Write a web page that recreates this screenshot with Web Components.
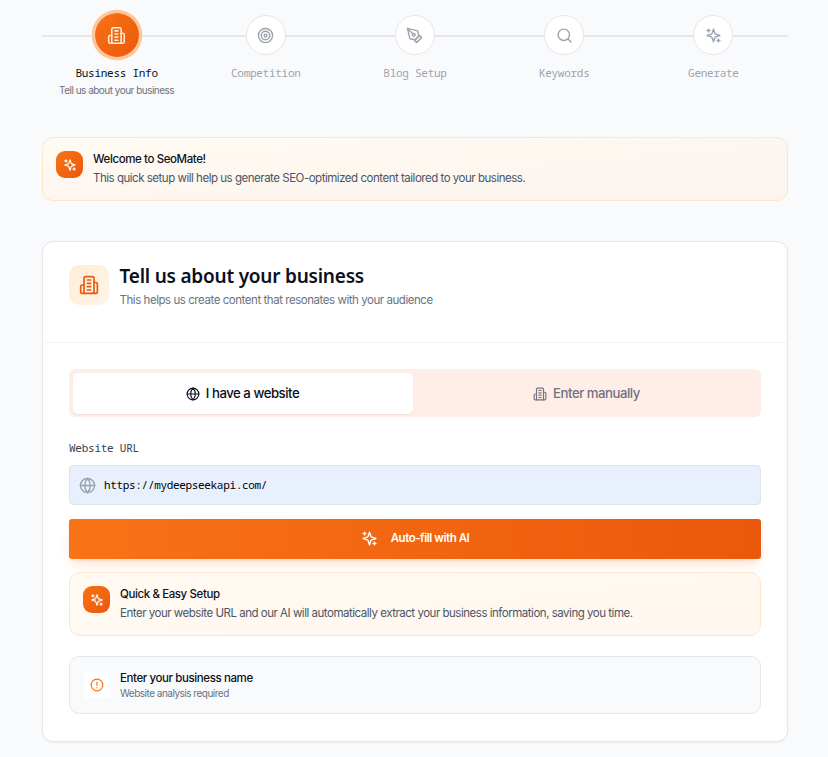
<!DOCTYPE html>
<html lang="en">
<head>
<meta charset="utf-8">
<title>SeoMate setup</title>
<style>
  body {
    margin: 0;
    background: #f9fafc;
    color: #0b1020;
    font-family: Inter, "Liberation Sans", sans-serif;
    --mono: "Noto Sans Mono", "DejaVu Sans Mono", monospace;
  }
</style>
</head>
<body>
<setup-wizard></setup-wizard>

<script>
const ICONS = {
  building: '<path d="M6 22V4a2 2 0 0 1 2-2h8a2 2 0 0 1 2 2v18Z"/><path d="M6 12H4a2 2 0 0 0-2 2v6a2 2 0 0 0 2 2h2"/><path d="M18 9h2a2 2 0 0 1 2 2v9a2 2 0 0 1-2 2h-2"/><path d="M10 6h4M10 10h4M10 14h4M10 18h4"/>',
  target: '<circle cx="12" cy="12" r="10"/><circle cx="12" cy="12" r="6"/><circle cx="12" cy="12" r="2"/>',
  pen: '<path d="m12 19 7-7 3 3-7 7-3-3z"/><path d="m18 13-1.5-7.5L2 2l3.5 14.5L13 18l5-5z"/><path d="m2 2 7.586 7.586"/><circle cx="11" cy="11" r="2"/>',
  search: '<circle cx="11" cy="11" r="8"/><path d="m21 21-4.3-4.3"/>',
  sparkles: '<path d="m12 3-1.912 5.813a2 2 0 0 1-1.275 1.275L3 12l5.813 1.912a2 2 0 0 1 1.275 1.275L12 21l1.912-5.813a2 2 0 0 1 1.275-1.275L21 12l-5.813-1.912a2 2 0 0 1-1.275-1.275L12 3Z"/><path d="M5 3v4M19 17v4M3 5h4M17 19h4"/>',
  globe: '<circle cx="12" cy="12" r="10"/><path d="M12 2a14.5 14.5 0 0 0 0 20 14.5 14.5 0 0 0 0-20"/><path d="M2 12h20"/>',
  alert: '<circle cx="12" cy="12" r="10"/><path d="M12 7v6M12 16.5h.01"/>',
};

class UiIcon extends HTMLElement {
  constructor() {
    super();
    this.attachShadow({ mode: 'open' });
  }

  connectedCallback() {
    const size = this.getAttribute('size') || 16;
    this.shadowRoot.innerHTML = `
      <style>
        :host { display: block; flex: none; width: ${size}px; height: ${size}px; }
        svg { display: block; }
      </style>
      <svg width="${size}" height="${size}" viewBox="0 0 24 24" fill="none" stroke="currentColor"
        stroke-width="2" stroke-linecap="round" stroke-linejoin="round">${ICONS[this.getAttribute('name')]}</svg>
    `;
  }
}

class StepItem extends HTMLElement {
  constructor() {
    super();
    this.attachShadow({ mode: 'open' });
  }

  connectedCallback() {
    this.shadowRoot.innerHTML = `
      <style>
        :host {
          display: flex;
          flex-direction: column;
          align-items: center;
          color: #9ca3af;
        }

        .dot {
          display: grid;
          place-items: center;
          box-sizing: border-box;
          width: 40px;
          height: 40px;
          border-radius: 50%;
          border: 1px solid #e5e7eb;
          background: #fff;
        }

        .label {
          margin-top: 10px;
          font: 11px/16px var(--mono);
          letter-spacing: -0.27px;
        }

        ::slotted(*) {
          margin-top: 2px;
          font-size: 10px;
          line-height: 15px;
          letter-spacing: -0.51px;
          color: #6b7280;
        }

        :host([active]) .dot {
          border: 0;
          padding-right: 1px;
          color: #ffedd5;
          background: linear-gradient(135deg, #f97316, #ea580c);
          box-shadow: 0 0 0 3px #fdc79d, 0 2px 5px rgba(249, 115, 22, 0.12);
          transform: scale(1.1);
        }

        :host([active]) .label { color: #0b1020; }
      </style>
      <div class="dot"><ui-icon name="${this.getAttribute('icon')}" size="17"></ui-icon></div>
      <div class="label">${this.getAttribute('label')}</div>
      <slot></slot>
    `;
  }
}

class StepBar extends HTMLElement {
  constructor() {
    super();
    this.attachShadow({ mode: 'open' }).innerHTML = `
      <style>
        :host {
          display: grid;
          grid-template-columns: repeat(5, 1fr);
          height: 122px;
          padding-top: 15px;
          box-sizing: border-box;
          background: linear-gradient(#e5e7eb, #e5e7eb) 0 35px / 100% 2px no-repeat;
        }
      </style>
      <slot></slot>
    `;
  }
}

class TipBanner extends HTMLElement {
  constructor() {
    super();
    this.attachShadow({ mode: 'open' }).innerHTML = `
      <style>
        :host {
          display: flex;
          align-items: flex-start;
          gap: 10px;
          box-sizing: border-box;
          height: 64px;
          padding: 13px;
          border: 1px solid #fee6cb;
          border-radius: 11px;
          background: linear-gradient(to bottom right, #fffaf2, var(--tip-end, #fff7f0));
        }

        .badge {
          display: grid;
          place-items: center;
          width: 27px;
          height: 27px;
          border-radius: 9px;
          color: #fff;
          background: linear-gradient(135deg, #f97316, #ea580c);
        }

        .title {
          font-size: 11.5px;
          font-weight: 500;
          line-height: 17px;
          letter-spacing: -0.4px;
        }

        .text {
          margin-top: 2px;
          font-size: 11.5px;
          line-height: 17px;
          letter-spacing: -0.48px;
          color: #4b5563;
        }
      </style>
      <div class="badge"><ui-icon name="sparkles" size="14"></ui-icon></div>
      <div>
        <div class="title"><slot name="title"></slot></div>
        <div class="text"><slot></slot></div>
      </div>
    `;
  }
}

class SetupCard extends HTMLElement {
  constructor() {
    super();
    this.attachShadow({ mode: 'open' }).innerHTML = `
      <style>
        :host {
          display: block;
          box-sizing: border-box;
          height: 501px;
          border: 1px solid #e5e7eb;
          border-radius: 11px;
          background: #fff;
          box-shadow: 0 1px 2px rgba(0, 0, 0, 0.05);
        }

        header {
          display: flex;
          gap: 10.5px;
          box-sizing: border-box;
          height: 101px;
          padding: 23px 26px;
          border-bottom: 1px solid #f3f4f6;
        }

        .badge {
          display: grid;
          place-items: center;
          width: 40px;
          height: 40px;
          border-radius: 10px;
          color: #ea580c;
          background: linear-gradient(135deg, #ffedd5, #fff4e8);
        }

        h2 {
          margin: -1px 0 0;
          font: 600 19px/24px "Noto Sans", sans-serif;
          letter-spacing: -0.22px;
        }

        p {
          margin: 4px 0 0;
          font-size: 11.5px;
          line-height: 17px;
          letter-spacing: -0.45px;
          color: #6b7280;
        }

        .body {
          display: flex;
          flex-direction: column;
          padding: 26px;
        }
      </style>
      <header>
        <div class="badge"><ui-icon name="building" size="20"></ui-icon></div>
        <div>
          <h2><slot name="title"></slot></h2>
          <p><slot name="subtitle"></slot></p>
        </div>
      </header>
      <div class="body"><slot></slot></div>
    `;
  }
}

class TabList extends HTMLElement {
  constructor() {
    super();
    this.attachShadow({ mode: 'open' }).innerHTML = `
      <style>
        :host {
          display: grid;
          grid-template-columns: 1fr 1fr;
          box-sizing: border-box;
          height: 48px;
          padding: 4px 4px 3px;
          border-radius: 6px;
          background: #feeee7;
        }
      </style>
      <slot></slot>
    `;
  }
}

class TabItem extends HTMLElement {
  constructor() {
    super();
    this.attachShadow({ mode: 'open' });
  }

  connectedCallback() {
    this.shadowRoot.innerHTML = `
      <style>
        :host {
          display: flex;
          align-items: center;
          justify-content: center;
          gap: 6px;
          padding-left: 1px;
          border-radius: 5px;
          font-size: 13.2px;
          font-weight: 500;
          letter-spacing: -0.48px;
          color: #71717f;
        }

        :host([selected]) {
          margin-right: 2px;
          padding: 0 1px 0 0;
          color: #0b1020;
          background: #fff;
          box-shadow: 0 1px 2px rgba(0, 0, 0, 0.06);
        }

        span { line-height: 18px; padding-bottom: 1px; }
      </style>
      <ui-icon name="${this.getAttribute('icon')}" size="14"></ui-icon>
      <span><slot></slot></span>
    `;
  }
}

class UrlField extends HTMLElement {
  constructor() {
    super();
    this.attachShadow({ mode: 'open' });
  }

  connectedCallback() {
    this.shadowRoot.innerHTML = `
      <style>
        :host { display: block; margin-top: 23px; font: 11px/16px var(--mono); }

        label { display: block; letter-spacing: -0.25px; color: #374151; }

        .box {
          display: flex;
          align-items: center;
          gap: 8px;
          box-sizing: border-box;
          height: 40px;
          margin-top: 9px;
          padding: 0 9px;
          border: 1px solid #dfe4ec;
          border-radius: 4px;
          background: #e8effd;
          color: #000;
          letter-spacing: -0.33px;
        }

        ui-icon { color: #9ca3af; }
      </style>
      <label>${this.getAttribute('label')}</label>
      <div class="box"><ui-icon name="globe" size="17"></ui-icon><span><slot></slot></span></div>
    `;
  }
}

class ActionButton extends HTMLElement {
  constructor() {
    super();
    this.attachShadow({ mode: 'open' }).innerHTML = `
      <style>
        :host {
          display: flex;
          align-items: center;
          justify-content: center;
          gap: 13px;
          box-sizing: border-box;
          height: 40px;
          margin: 14px 0 13px;
          padding-bottom: 2px;
          border-radius: 3px;
          font-size: 11.5px;
          font-weight: 600;
          letter-spacing: -0.46px;
          color: #fff;
          background: linear-gradient(90deg, #f97316, #ea580c);
          box-shadow: 0 8px 12px -3px rgba(249, 115, 22, 0.2), 0 3px 5px -3px rgba(249, 115, 22, 0.2);
        }
      </style>
      <ui-icon name="sparkles" size="17"></ui-icon>
      <span><slot></slot></span>
    `;
  }
}

class StatusRow extends HTMLElement {
  constructor() {
    super();
    this.attachShadow({ mode: 'open' }).innerHTML = `
      <style>
        :host {
          display: flex;
          align-items: center;
          gap: 10px;
          box-sizing: border-box;
          height: 58px;
          margin-top: 20px;
          padding: 0 14px;
          border: 1px solid #e5e7eb;
          border-radius: 10px;
          background: #f9fafc;
        }

        .badge {
          display: grid;
          place-items: center;
          width: 26px;
          height: 26px;
          color: #f97316;
          background: #fff;
        }

        .copy { padding-bottom: 2px; }

        .title {
          padding-top: 2px;
          font-size: 11.5px;
          font-weight: 500;
          line-height: 15px;
          letter-spacing: -0.4px;
        }

        .note {
          font-size: 10px;
          line-height: 14px;
          letter-spacing: -0.5px;
          color: #6b7280;
        }
      </style>
      <div class="badge"><ui-icon name="alert" size="14"></ui-icon></div>
      <div class="copy">
        <div class="title"><slot name="title"></slot></div>
        <div class="note"><slot></slot></div>
      </div>
    `;
  }
}

class SetupWizard extends HTMLElement {
  constructor() {
    super();
    this.attachShadow({ mode: 'open' }).innerHTML = `
      <style>
        :host {
          display: flex;
          flex-direction: column;
          box-sizing: border-box;
          width: 828px;
          height: 757px;
          padding: 0 40px 0 42px;
          overflow: hidden;
        }

        .welcome {
          margin: 15px 0 40px;
          --tip-end: #fbf4ef;
        }
      </style>
      <step-bar>
        <step-item icon="building" label="Business Info" active><span>Tell us about your business</span></step-item>
        <step-item icon="target" label="Competition"></step-item>
        <step-item icon="pen" label="Blog Setup"></step-item>
        <step-item icon="search" label="Keywords"></step-item>
        <step-item icon="sparkles" label="Generate"></step-item>
      </step-bar>

      <tip-banner class="welcome">
        <span slot="title">Welcome to SeoMate!</span>
        This quick setup will help us generate SEO-optimized content tailored to your business.
      </tip-banner>

      <setup-card>
        <span slot="title">Tell us about your business</span>
        <span slot="subtitle">This helps us create content that resonates with your audience</span>

        <tab-list>
          <tab-item icon="globe" selected>I have a website</tab-item>
          <tab-item icon="building">Enter manually</tab-item>
        </tab-list>
        <url-field label="Website URL">https://mydeepseekapi.com/</url-field>
        <action-button>Auto-fill with AI</action-button>
        <tip-banner>
          <span slot="title">Quick &amp; Easy Setup</span>
          Enter your website URL and our AI will automatically extract your business information, saving you time.
        </tip-banner>
        <status-row>
          <span slot="title">Enter your business name</span>
          Website analysis required
        </status-row>
      </setup-card>
    `;
  }
}

customElements.define('ui-icon', UiIcon);
customElements.define('step-item', StepItem);
customElements.define('step-bar', StepBar);
customElements.define('tip-banner', TipBanner);
customElements.define('setup-card', SetupCard);
customElements.define('tab-list', TabList);
customElements.define('tab-item', TabItem);
customElements.define('url-field', UrlField);
customElements.define('action-button', ActionButton);
customElements.define('status-row', StatusRow);
customElements.define('setup-wizard', SetupWizard);
</script>
</body>
</html>
